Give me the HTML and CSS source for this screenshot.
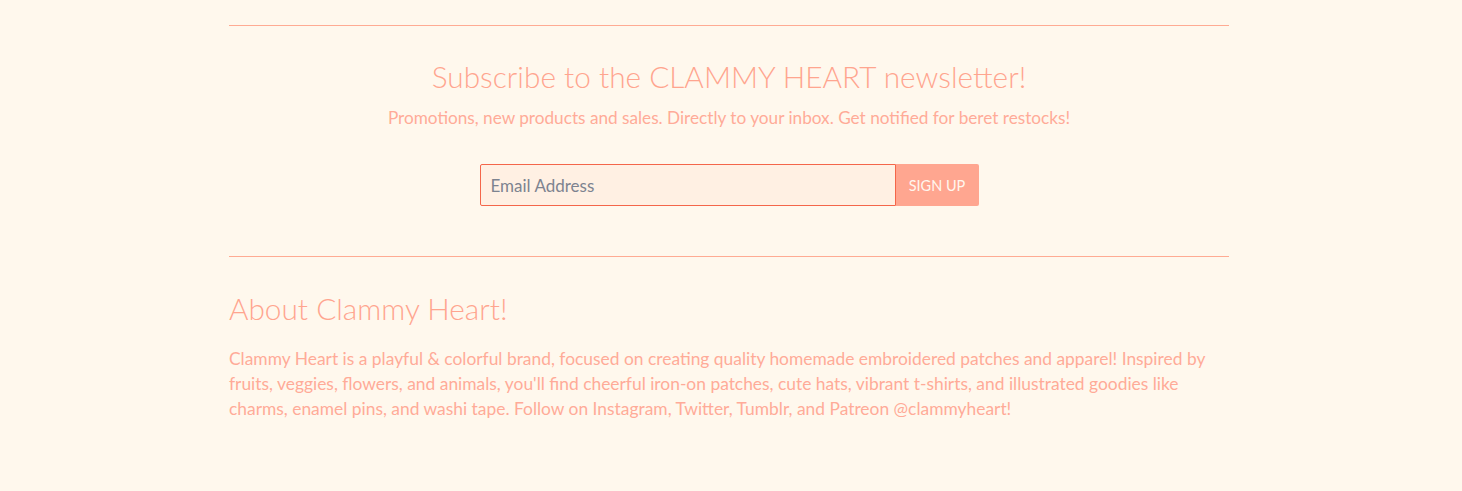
FILE: index.html
```html
<!DOCTYPE html>
<html>
<head>
<meta charset="utf-8">
<link rel="stylesheet" href="styles.css">
</head>
<body>
<div class="wrap">
  <hr class="rule">
  <section class="newsletter">
    <h2 class="news-title">Subscribe to the CLAMMY HEART newsletter!</h2>
    <p class="news-sub">Promotions, new products and sales. Directly to your inbox. Get notified for beret restocks!</p>
    <form class="news-form">
      <input class="news-input" type="email" placeholder="Email Address">
      <button class="news-btn" type="button">SIGN UP</button>
    </form>
  </section>
  <hr class="rule">
  <section class="about">
    <h2 class="about-title">About Clammy Heart!</h2>
    <p class="about-text">Clammy Heart is a playful &amp; colorful brand, focused on creating quality homemade embroidered patches and apparel! Inspired by fruits, veggies, flowers, and animals, you'll find cheerful iron-on patches, cute hats, vibrant t-shirts, and illustrated goodies like charms, enamel pins, and washi tape. Follow on Instagram, Twitter, Tumblr, and Patreon @clammyheart!</p>
  </section>
</div>
</body>
</html>
```
FILE: styles.css
```css
html, body {
  margin: 0;
  padding: 0;
  background: #fff8ed;
}
body {
  font-family: "Lato", "Liberation Sans", sans-serif;
  color: #ffab98;
}
.wrap {
  width: 1000px;
  margin-left: calc(50% - 502px);
  padding-top: 25px;
}
.rule {
  border: 0;
  border-top: 1px solid #ffab93;
  margin: 0;
}
.newsletter {
  text-align: center;
  padding: 34px 0 50px;
}
.news-title {
  font-weight: 300;
  font-size: 29.8px;
  line-height: 34px;
  margin: 0;
  color: #ffa58f;
}
.news-sub {
  font-size: 17.2px;
  line-height: 22px;
  margin: 13px 0 0;
  font-weight: 400;
}
.news-form {
  display: flex;
  justify-content: center;
  margin-top: 35px;
}
.news-input {
  box-sizing: border-box;
  width: 416px;
  height: 42px;
  border: 1px solid #f4664a;
  border-radius: 2px 0 0 2px;
  background: #fff0e3;
  padding: 0 10px;
  font-family: inherit;
  font-size: 17px;
  color: #777;
  outline: none;
}
.news-input::placeholder {
  color: #7d8390;
}
.news-btn {
  width: 83px;
  height: 42px;
  border: 0;
  border-radius: 0 2px 2px 0;
  background: #ffa690;
  color: #fff6ee;
  font-family: inherit;
  font-size: 14.5px;
  padding: 0;
}
.about {
  padding-top: 35px;
}
.about-title {
  font-weight: 300;
  font-size: 29.8px;
  line-height: 34px;
  margin: 0;
  color: #ffa58f;
}
.about-text {
  font-size: 17.4px;
  line-height: 25px;
  margin: 20px 0 0;
}
```
